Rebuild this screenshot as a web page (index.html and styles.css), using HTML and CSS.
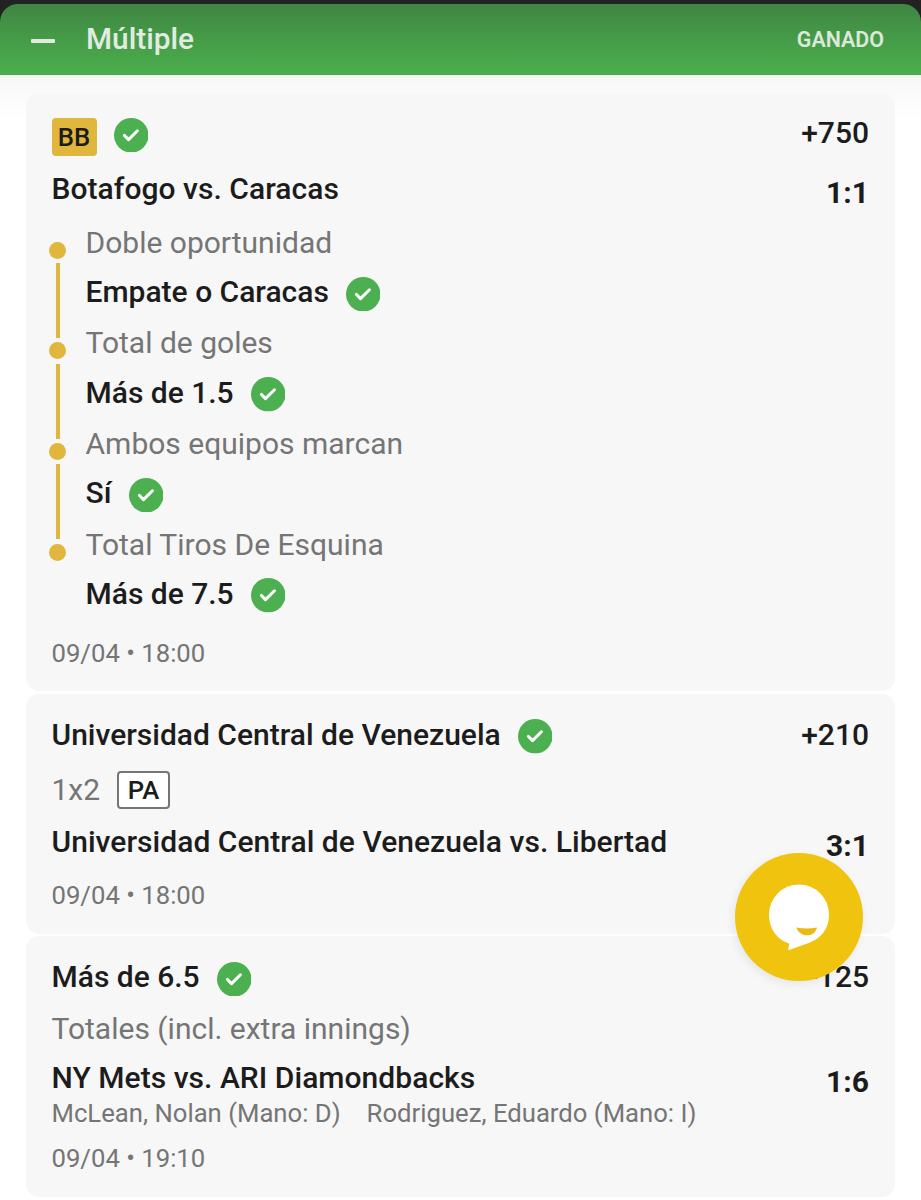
FILE: index.html
```html
<!DOCTYPE html>
<html lang="es">
<head>
    <meta charset="UTF-8">
    <meta name="viewport" content="width=device-width, initial-scale=1.0">
    <title>Múltiple</title>
    <link rel="stylesheet" href="styles.css">
</head>
<body>

    <svg class="defs" width="0" height="0">
        <symbol id="check" viewBox="0 0 34 34">
            <circle cx="17" cy="17" r="17" fill="#4caf50"/>
            <path d="M10.3 17.2l4 4.1 8.8-8.7" fill="none" stroke="#fff" stroke-width="3" stroke-linecap="round" stroke-linejoin="round"/>
        </symbol>
    </svg>

    <div class="top">
        <header class="header">
            <span class="collapse"></span>
            <span class="header-title">Múltiple</span>
            <span class="status">GANADO</span>
        </header>
    </div>

    <main class="bets">
        <!-- Bet builder -->
        <section class="card builder">
            <div class="row first">
                <span class="badge bb">BB</span>
                <svg class="check"><use href="#check"/></svg>
                <span class="odds">+750</span>
            </div>
            <div class="row match">
                <span class="name">Botafogo vs. Caracas</span>
                <span class="score">1:1</span>
            </div>
            <ul class="legs">
                <li>
                    <div class="market">Doble oportunidad</div>
                    <div class="pick">Empate o Caracas <svg class="check"><use href="#check"/></svg></div>
                </li>
                <li>
                    <div class="market">Total de goles</div>
                    <div class="pick">Más de 1.5 <svg class="check"><use href="#check"/></svg></div>
                </li>
                <li>
                    <div class="market">Ambos equipos marcan</div>
                    <div class="pick">Sí <svg class="check"><use href="#check"/></svg></div>
                </li>
                <li>
                    <div class="market">Total Tiros De Esquina</div>
                    <div class="pick">Más de 7.5 <svg class="check"><use href="#check"/></svg></div>
                </li>
            </ul>
            <div class="date">09/04 • 18:00</div>
        </section>

        <section class="card winner">
            <div class="row">
                <span class="name">Universidad Central de Venezuela</span>
                <svg class="check"><use href="#check"/></svg>
                <span class="odds">+210</span>
            </div>
            <div class="row type">
                <span class="market-name">1x2</span>
                <span class="badge pa">PA</span>
            </div>
            <div class="row match">
                <span class="name">Universidad Central de Venezuela vs. Libertad</span>
                <span class="score">3:1</span>
            </div>
            <div class="date">09/04 • 18:00</div>
        </section>

        <section class="card totals">
            <div class="row">
                <span class="name">Más de 6.5</span>
                <svg class="check"><use href="#check"/></svg>
                <span class="odds">-125</span>
            </div>
            <div class="row type">Totales (incl. extra innings)</div>
            <div class="row match">
                <span class="name">NY Mets vs. ARI Diamondbacks</span>
                <span class="score">1:6</span>
            </div>
            <div class="pitchers">
                <span>McLean, Nolan (Mano: D)</span>
                <span>Rodriguez, Eduardo (Mano: I)</span>
            </div>
            <div class="date">09/04 • 19:10</div>
        </section>
    </main>

    <!-- Chat -->
    <button class="chat" aria-label="Chat">
        <svg width="128" height="128" viewBox="0 0 128 128">
            <path d="M64 31.500a30 30 0 0 1 30 30.500c0 14-8 23-19 27.500L54 97c-.6.100-.9-.3-.8-.8l1.300-5.400C42.500 87 34 76 34 62a30 30 0 0 1 30-30.500z" fill="#fff"/>
            <path d="M61.500 74.500q10 1.800 20.500 0c-1 5-5 7.800-10 7.800s-9.500-3.300-10.500-7.800z" fill="#e8bb14"/>
        </svg>
    </button>

</body>
</html>
```
FILE: styles.css
```css
* {
    box-sizing: border-box;
}

body {
    margin: 0;
    height: 1200px;
    overflow: hidden;
    background: #fff;
    color: #1c1c1c;
    font-family: Roboto, sans-serif;
    font-size: 30px;
}

.defs {
    position: absolute;
}

/* Header */
.top {
    height: 75px;
    padding-top: 4px;
    background: #222;
}

.header {
    display: flex;
    align-items: center;
    height: 71px;
    padding: 0 37px 0 31px;
    border-radius: 18px 18px 0 0;
    background: linear-gradient(#408542, #459c48 50%, #4bae4c);
    color: #e2ebe2;
}

.collapse {
    width: 24px;
    height: 4px;
    margin: 2px 31px 0 0;
    border-radius: 1px;
    background: #e2ebe2;
}

.header-title {
    margin-top: -2px;
    font-size: 29.8px;
    font-weight: 500;
}

.status {
    margin-left: auto;
    font-size: 21.4px;
    font-weight: 600;
    color: #dce8dc;
}

/* Cards */
.bets {
    display: flex;
    flex-direction: column;
    gap: 2.7px;
    padding: 17.5px 26px 0;
    background: linear-gradient(#f7f7f7, #fff 44px);
}

.card {
    padding: 19.5px 26px 23.8px 25.5px;
    border-radius: 13px;
    background: #f7f7f7;
}

.row {
    display: flex;
    align-items: center;
    height: 42px;
    white-space: nowrap;
}

.name,
.odds,
.pick {
    font-weight: 500;
}

.match .name {
    letter-spacing: 0.04px;
}

.odds,
.score {
    margin-left: auto;
}

.score {
    padding-top: 8px;
    font-weight: 700;
}

.check {
    flex: none;
    width: 34.5px;
    height: 34.5px;
    margin: 4px 0 0 17px;
}

.badge {
    display: flex;
    align-items: center;
    justify-content: center;
    height: 38px;
    border-radius: 4px;
    font-size: 25.7px;
    font-weight: 500;
}

.bb {
    width: 45px;
    margin-top: -1px;
    background: #e0b63c;
}

.pa {
    width: 53px;
    margin-left: 17px;
    border: 2px solid #757575;
    background: #fff;
    color: #1c1c1c;
}

.type,
.market,
.date,
.pitchers {
    color: #757575;
}

.date {
    margin-top: 17px;
    font-size: 25.7px;
    line-height: 30px;
}

/* Bet builder */
.builder {
    padding-top: 26px;
    padding-bottom: 23px;
}

.first {
    align-items: flex-start;
    height: 38px;
}

.first .check {
    margin-top: -1px;
}

.first .odds {
    line-height: 28px;
}

.builder .match {
    margin-top: 11.3px;
}

.legs {
    margin: 9px 0 0;
    padding: 0;
    list-style: none;
}

.legs li {
    position: relative;
    height: 100.6px;
    padding-left: 34px;
}

.legs li:last-child {
    height: 96.5px;
}

/* timeline dot and the line down to the next one */
.legs li::before {
    content: "";
    position: absolute;
    top: 23px;
    left: -2.5px;
    width: 17px;
    height: 17px;
    border-radius: 50%;
    background: #e0b63c;
}

.legs li:not(:last-child)::after {
    content: "";
    position: absolute;
    top: 44.5px;
    left: 4px;
    width: 4.3px;
    height: 75px;
    background: #e0b63c;
}

.market {
    height: 47px;
    line-height: 47px;
}

.pick {
    display: flex;
    align-items: center;
    height: 47px;
    margin-top: 2.5px;
}

.builder .date {
    margin-top: 21px;
}

/* 1x2 */
.winner {
    padding-top: 19.8px;
}

.winner .type {
    height: 38px;
    margin: 15.5px 0 11.8px;
}

.market-name {
    margin-top: -1px;
}

/* Totals */
.totals .type {
    height: 38px;
    margin: 11.6px 0 8.8px;
}

.pitchers {
    display: flex;
    gap: 26px;
    margin-top: 2.2px;
    font-size: 25.7px;
    line-height: 26px;
    white-space: nowrap;
}

/* Chat button */
.chat {
    position: absolute;
    top: 852.5px;
    left: 735px;
    width: 128px;
    height: 128px;
    padding: 0;
    border: none;
    border-radius: 50%;
    background: #f0c30e;
    box-shadow: -2px 3px 10px rgba(0, 0, 0, 0.07);
}

.chat svg {
    display: block;
}
```
